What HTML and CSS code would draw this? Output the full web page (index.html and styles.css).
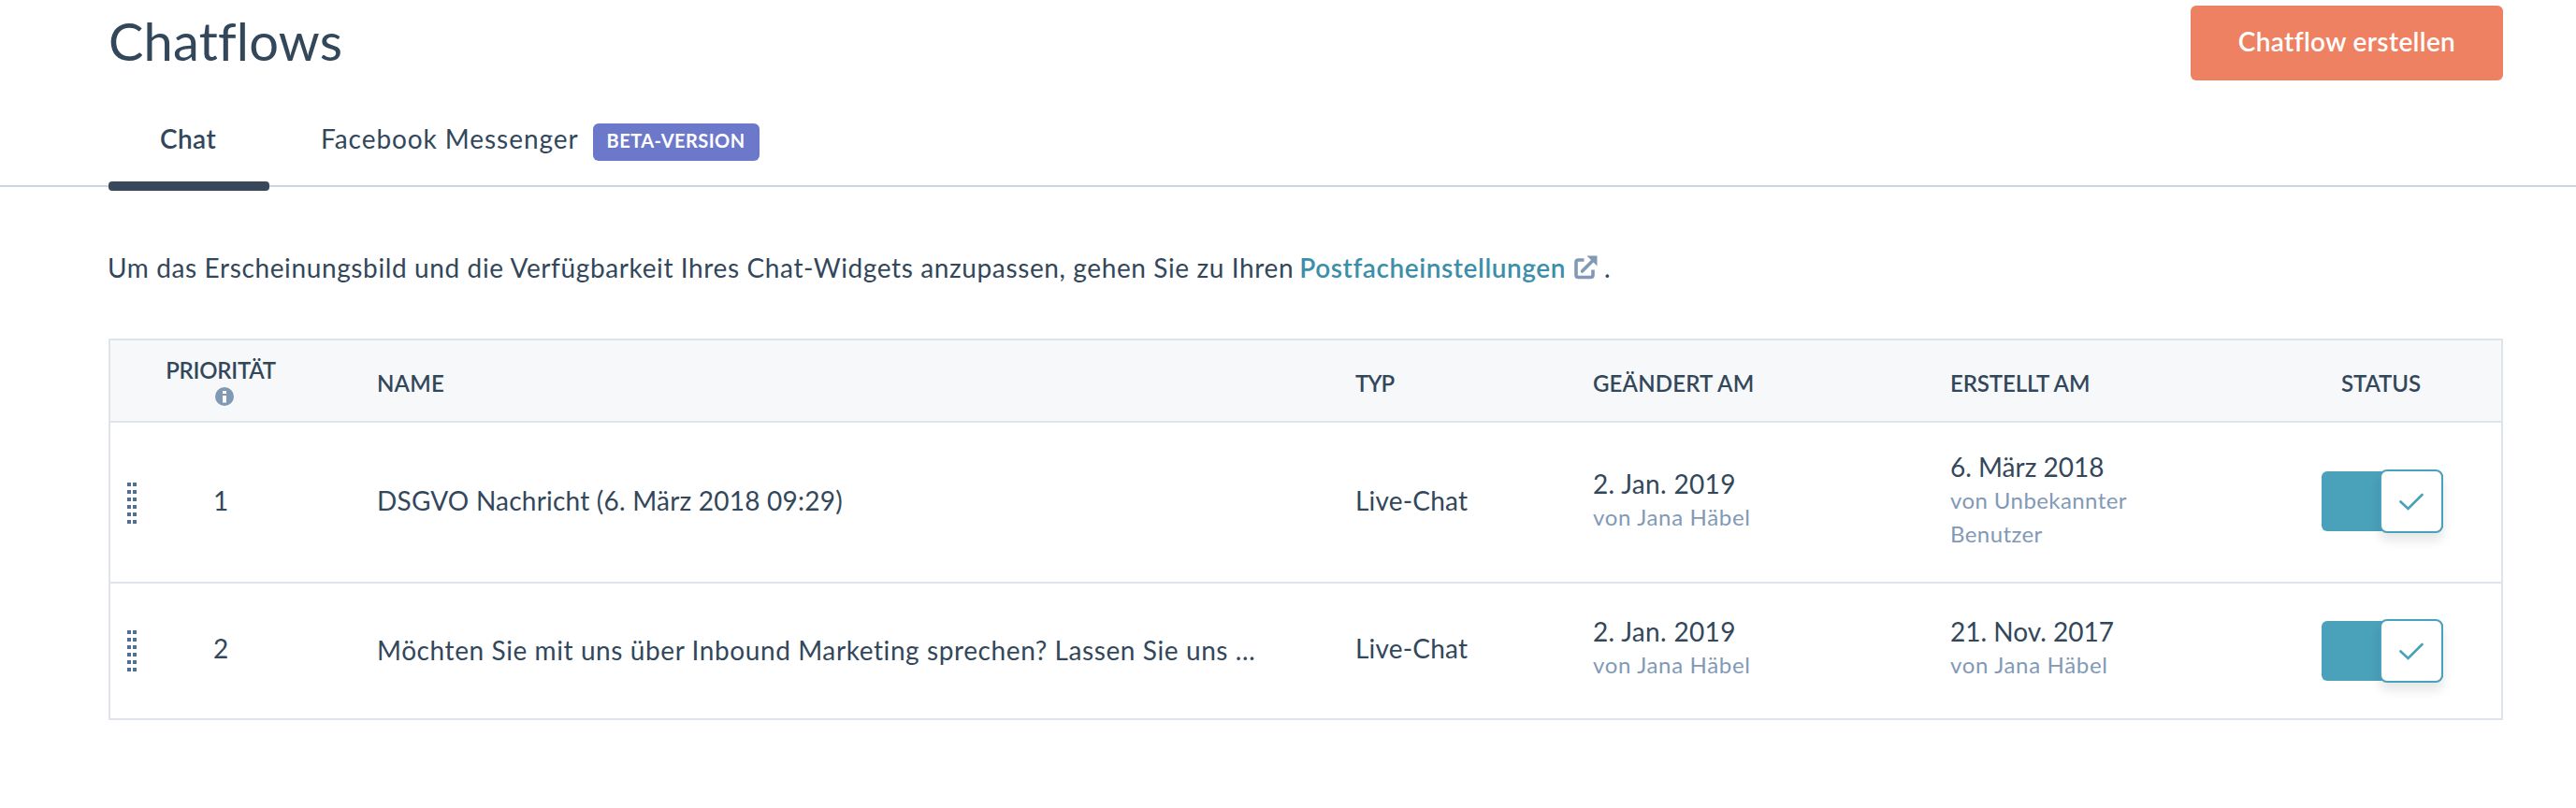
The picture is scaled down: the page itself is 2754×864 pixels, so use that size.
FILE: index.html
```html
<!DOCTYPE html>
<html lang="de">
<head>
<meta charset="utf-8">
<title>Chatflows</title>
<link rel="stylesheet" href="styles.css">
</head>
<body>
<header class="page-header">
  <h1 class="title">Chatflows</h1>
  <button class="create-button" type="button">Chatflow erstellen</button>
</header>
<nav class="tabs">
  <a class="tab tab-active">Chat</a>
  <a class="tab"><span class="tab-label">Facebook Messenger</span><span class="badge">BETA-VERSION</span></a>
</nav>
<main class="content">
  <p class="intro"><span class="intro-text">Um das Erscheinungsbild und die Verfügbarkeit Ihres Chat-Widgets anzupassen, gehen Sie zu Ihren</span><a class="link">Postfacheinstellungen</a><svg class="external" viewBox="0 0 25 26" width="25" height="26"><path d="M10.500 5H4.500Q2 5 2 7.500V21Q2 23.500 4.500 23.500H17.500Q20 23.500 20 21V15.500" fill="none" stroke="#8299b6" stroke-width="3.600"/><path d="M8.500 17L20 5.500" stroke="#8299b6" stroke-width="3.600" stroke-linecap="round"/><path d="M13.500 0.500H24.500V11.500Z" fill="#8299b6"/></svg><span>.</span></p>
  <section class="table">
    <div class="row head">
      <div></div>
      <div class="priority"><span>PRIORITÄT</span><svg class="info" viewBox="0 0 20 20" width="20" height="20"><circle cx="10" cy="10" r="10" fill="#8299b6"/><path d="M8 4h4v3H8zM8 9h4v7.500H8z" fill="#fff"/></svg></div>
      <div class="name">NAME</div>
      <div class="typ">TYP</div>
      <div class="changed">GEÄNDERT AM</div>
      <div class="created">ERSTELLT AM</div>
      <div class="status">STATUS</div>
    </div>
    <div class="row first">
      <div class="handle"><svg viewBox="0 0 10 44" width="10" height="44" fill="#516f90" shape-rendering="crispEdges"><path d="M0 0h4v4h-4zM6 0h4v4h-4zM0 8h4v4h-4zM6 8h4v4h-4zM0 16h4v4h-4zM6 16h4v4h-4zM0 24h4v4h-4zM6 24h4v4h-4zM0 32h4v4h-4zM6 32h4v4h-4zM0 40h4v4h-4zM6 40h4v4h-4z"/></svg></div>
      <div class="priority">1</div>
      <div class="name">DSGVO Nachricht (6. März 2018 09:29)</div>
      <div class="typ">Live-Chat</div>
      <div class="changed"><div class="date jan">2. Jan. 2019</div><div class="by">von Jana Häbel</div></div>
      <div><div class="date">6. März 2018</div><div class="by unknown">von Unbekannter<br>Benutzer</div></div>
      <div class="status"><div class="toggle"><div class="knob"><svg viewBox="0 0 26 19" width="26" height="19"><path d="M1.500 9.500L9.500 17L24.500 2" fill="none" stroke="#4aa1ba" stroke-width="2.600" stroke-linecap="round"/></svg></div></div></div>
    </div>
    <div class="row second">
      <div class="handle"><svg viewBox="0 0 10 44" width="10" height="44" fill="#516f90" shape-rendering="crispEdges"><path d="M0 0h4v4h-4zM6 0h4v4h-4zM0 8h4v4h-4zM6 8h4v4h-4zM0 16h4v4h-4zM6 16h4v4h-4zM0 24h4v4h-4zM6 24h4v4h-4zM0 32h4v4h-4zM6 32h4v4h-4zM0 40h4v4h-4zM6 40h4v4h-4z"/></svg></div>
      <div class="priority">2</div>
      <div class="name">Möchten Sie mit uns über Inbound Marketing sprechen? Lassen Sie uns <span class="dots">…</span></div>
      <div class="typ">Live-Chat</div>
      <div class="changed"><div class="date jan">2. Jan. 2019</div><div class="by">von Jana Häbel</div></div>
      <div><div class="date">21. Nov. 2017</div><div class="by">von Jana Häbel</div></div>
      <div class="status"><div class="toggle"><div class="knob"><svg viewBox="0 0 26 19" width="26" height="19"><path d="M1.500 9.500L9.500 17L24.500 2" fill="none" stroke="#4aa1ba" stroke-width="2.600" stroke-linecap="round"/></svg></div></div></div>
    </div>
  </section>
</main>
</body>
</html>
```
FILE: styles.css
```css
* { box-sizing: border-box; }

body {
  margin: 0;
  background: #fff;
  color: #33475b;
  font: 400 28px/36px Lato, "Open Sans", sans-serif;
}

.page-header {
  display: flex;
  justify-content: space-between;
  align-items: flex-start;
  height: 120px;
  padding: 6px 78px 0 116px;
}

.title {
  margin: 7px 0 0;
  font-size: 56px;
  font-weight: 400;
  line-height: 62px;
  letter-spacing: 0.2px;
}

.create-button {
  width: 334px;
  height: 80px;
  padding: 0 0 4px;
  border: 0;
  border-radius: 6px;
  background: #ee8162;
  color: #fff;
  font: 600 28px/36px Lato, "Open Sans", sans-serif;
  letter-spacing: 0.35px;
}

.tabs {
  display: flex;
  height: 80px;
  padding-left: 116px;
  border-bottom: 2px solid #cbd6e2;
}

.tab {
  display: flex;
  height: 84px;
  padding: 10px 56px 0 55px;
}

.tab-active {
  flex-direction: column;
  justify-content: space-between;
  width: 172px;
  padding-right: 0;
  font-weight: 600;
  letter-spacing: 0.4px;
}

.tab-active::after {
  content: "";
  width: 172px;
  height: 10px;
  margin-left: -55px;
  border-radius: 4px;
  background: #38475a;
}

.tab-label { letter-spacing: 0.93px; }

.badge {
  width: 178px;
  height: 40px;
  margin: 2px 0 0 15px;
  border-radius: 6px;
  background: #6c79cb;
  color: #fff;
  font-size: 20px;
  font-weight: 700;
  line-height: 37px;
  letter-spacing: 0.43px;
  text-align: center;
}

.content { padding: 68px 78px 0 115px; }

.intro {
  display: flex;
  height: 36px;
  margin: 0 0 58px;
}

.intro-text { letter-spacing: 0.62px; }

.link {
  margin-left: 6px;
  color: #3d8fa9;
  font-weight: 600;
  letter-spacing: 0.58px;
}

.external { margin: 5px 7px 0 9px; }

.table {
  margin-left: 1px;
  border: 2px solid #dfe3eb;
}

.row {
  display: grid;
  grid-template-columns: 44px 150px 1136px 254px 383px 311px 1fr;
  align-items: center;
}

.head {
  height: 88px;
  padding-top: 5px;
  border-bottom: 2px solid #dfe3eb;
  background: #f6f8fa;
  font-size: 24px;
  font-weight: 600;
}

.first {
  height: 172px;
  padding-bottom: 4px;
  border-bottom: 2px solid #dfe3eb;
}

.second {
  height: 144px;
  padding-bottom: 6px;
}

.priority {
  padding-right: 2px;
  text-align: center;
}

.head .priority {
  display: flex;
  flex-direction: column;
  align-items: center;
  padding-bottom: 3px;
  line-height: 28px;
  letter-spacing: -0.25px;
}

.info { margin: 4px 0 0 7px; }
.handle { display: flex; padding: 6px 0 0 18px; }

.name {
  padding-left: 91px;
  white-space: nowrap;
}

.typ, .changed { padding-left: 1px; }

.head .name { letter-spacing: 0.2px; }
.head .typ { letter-spacing: -1px; }
.head .changed { letter-spacing: 0.15px; }
.head .created { letter-spacing: -0.12px; }
.first .name { letter-spacing: 0.22px; }
.second .name { padding-top: 4px; letter-spacing: 0.59px; }
.dots { letter-spacing: 2px; }
.first .typ, .second .typ { letter-spacing: 0.2px; }
.jan { letter-spacing: 0.33px; }

.by {
  color: #8299b6;
  font-size: 24px;
  letter-spacing: 0.67px;
}

.unknown { letter-spacing: 0.42px; }

.head .status { padding-left: 107px; letter-spacing: -0.12px; }
.first .status, .second .status { padding-left: 86px; }
.first .status { padding-top: 2px; }
.second .status { padding-top: 6px; }

.toggle {
  display: flex;
  justify-content: flex-end;
  align-items: center;
  width: 130px;
  height: 64px;
  border-radius: 6px;
  background: #4aa1ba;
}

.knob {
  display: flex;
  justify-content: center;
  align-items: center;
  flex: none;
  width: 68px;
  height: 68px;
  border: 2px solid #4aa1ba;
  border-radius: 8px;
  background: #fff;
  box-shadow: 0 8px 12px rgba(0, 0, 0, 0.1);
}
```
